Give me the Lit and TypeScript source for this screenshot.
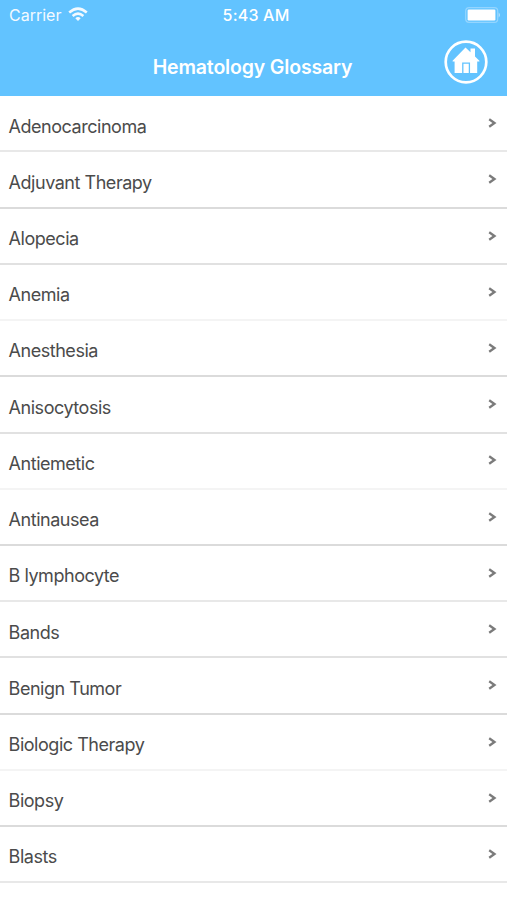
import { LitElement, html, css } from "lit";
import { customElement } from "lit/decorators.js";
import { classMap } from "lit/directives/class-map.js";

type Rule = "strong" | "medium" | "soft" | "faint";

const TERMS: [string, Rule][] = [
  ["Adenocarcinoma", "soft"],
  ["Adjuvant Therapy", "strong"],
  ["Alopecia", "medium"],
  ["Anemia", "faint"],
  ["Anesthesia", "strong"],
  ["Anisocytosis", "medium"],
  ["Antiemetic", "faint"],
  ["Antinausea", "strong"],
  ["B lymphocyte", "soft"],
  ["Bands", "medium"],
  ["Benign Tumor", "strong"],
  ["Biologic Therapy", "faint"],
  ["Biopsy", "strong"],
  ["Blasts", "soft"],
];

@customElement("app-root")
export class AppRoot extends LitElement {
  static styles = css`
    :host {
      display: flex;
      flex-direction: column;
      height: 900px;
      overflow: hidden;
      background: #fff;
      font-family: Inter, "Liberation Sans", sans-serif;
      color: #4b4b4b;
    }
    header { background: #62c3ff; color: #fff; height: 96px; flex: none; }
    .status, .bar {
      display: grid;
      grid-template-columns: 1fr auto 1fr;
      align-items: center;
    }
    .status { height: 29px; padding: 0 6.5px 0 9px; font-size: 16px; }
    .carrier { display: flex; align-items: center; gap: 7px; opacity: 0.93; }
    .time { font-weight: 500; letter-spacing: 0.2px; margin-left: 2.5px; }
    .battery { justify-self: end; }
    .bar { height: 66px; padding: 0 19px 0 16px; }
    h1 {
      grid-column: 2;
      margin: 10px 0 0 1px;
      font-size: 19.5px;
      line-height: 24px;
      font-weight: 600;
      letter-spacing: -0.16px;
    }
    .home { justify-self: end; }
    svg { display: block; }
    ul { list-style: none; margin: 0; padding: 0.2px 0 0; }
    li {
      display: flex;
      justify-content: space-between;
      box-sizing: border-box;
      height: 56.22px;
      padding: 18.4px 10px 0 8.6px;
      border-bottom: 2px solid;
      font-size: 18px;
      line-height: 24px;
      letter-spacing: -0.47px;
    }
    .strong { border-color: #dbdbdb; }
    .medium { border-color: #e1e1e1; }
    .soft { border-color: #e8e8e8; }
    .faint { border-color: #f4f4f4; }
    .chevron { margin-top: 3.6px; }
  `;

  render() {
    return html`
      <header>
        <div class="status">
          <div class="carrier">
            <span>Carrier</span>
            <svg width="20" height="15" viewBox="0 0 20 15" fill="none" stroke="#fff" stroke-width="2.5">
              <path d="M1.2 5.5Q10 -2.3 18.8 5.5M4.6 9Q10 4.2 15.4 9" />
              <path d="M10 14L7.3 11.3Q10 8.8 12.7 11.3Z" fill="#fff" stroke="none" />
            </svg>
          </div>
          <div class="time">5:43 AM</div>
          <svg class="battery" width="36" height="16" viewBox="0 0 36 16">
            <rect x=".7" y=".7" width="32" height="14.6" rx="3.4" fill="none" stroke="#94d5ff" stroke-width="1.2" />
            <rect x="2.6" y="2.6" width="27.8" height="10.8" rx="1.2" fill="#fff" />
            <path d="M33.7 5.4Q36.2 8 33.7 10.6Z" fill="#b5e2ff" />
          </svg>
        </div>
        <div class="bar">
          <h1>Hematology Glossary</h1>
          <svg class="home" width="44" height="44" viewBox="0 0 44 44">
            <circle cx="22" cy="22" r="20.3" fill="none" stroke="#fff" stroke-width="2.7" />
            <path fill="#fff" d="M21.5 7.5L26.5 12.3V8.4H31V16.6L35.4 20.8V21.4H33.2V33H10.6V21.4H8.6V20.8Z" />
            <path d="M18.8 33V23.2H25.4V33" fill="none" stroke="#62c3ff" stroke-width="1.3" />
          </svg>
        </div>
      </header>
      <ul>
        ${TERMS.map(([term, rule]) => html`
          <li class=${classMap({ [rule]: true })}>
            <span>${term}</span>
            <svg class="chevron" width="9" height="10" viewBox="0 0 9 10">
              <path d="M1.2 1.3L6.5 5L1.2 8.7" fill="none" stroke="#7b7b7b" stroke-width="2.3" />
            </svg>
          </li>`)}
      </ul>
    `;
  }
}
